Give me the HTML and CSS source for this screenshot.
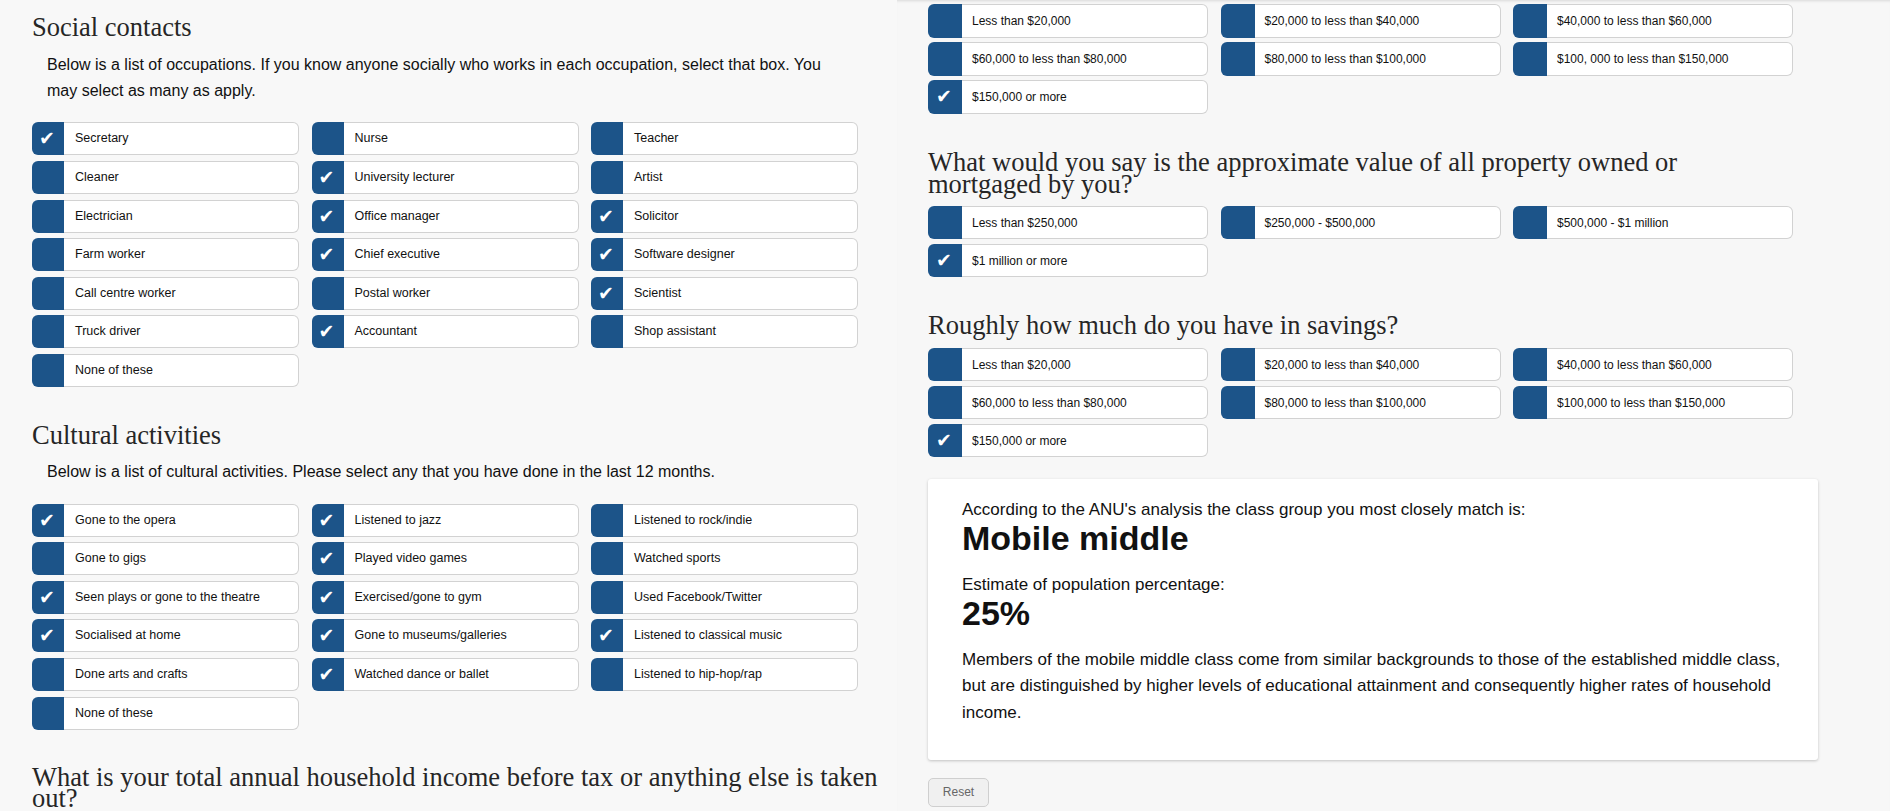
FILE: index.html
```html
<!DOCTYPE html>
<html lang="en">
<head>
<meta charset="utf-8">
<title>Class survey</title>
<link rel="stylesheet" href="styles.css">
</head>
<body>
<div class="page">
  <section class="pane pane-left">
    <h2 class="q-title first">Social contacts</h2>
    <p class="q-intro">Below is a list of occupations. If you know anyone socially who works in each occupation, select that box. You may select as many as apply.</p>
    <div class="opts">
      <div class="opt on"><span class="box">✔</span><span class="lbl">Secretary</span></div>
      <div class="opt"><span class="box"></span><span class="lbl">Nurse</span></div>
      <div class="opt"><span class="box"></span><span class="lbl">Teacher</span></div>
      <div class="opt"><span class="box"></span><span class="lbl">Cleaner</span></div>
      <div class="opt on"><span class="box">✔</span><span class="lbl">University lecturer</span></div>
      <div class="opt"><span class="box"></span><span class="lbl">Artist</span></div>
      <div class="opt"><span class="box"></span><span class="lbl">Electrician</span></div>
      <div class="opt on"><span class="box">✔</span><span class="lbl">Office manager</span></div>
      <div class="opt on"><span class="box">✔</span><span class="lbl">Solicitor</span></div>
      <div class="opt"><span class="box"></span><span class="lbl">Farm worker</span></div>
      <div class="opt on"><span class="box">✔</span><span class="lbl">Chief executive</span></div>
      <div class="opt on"><span class="box">✔</span><span class="lbl">Software designer</span></div>
      <div class="opt"><span class="box"></span><span class="lbl">Call centre worker</span></div>
      <div class="opt"><span class="box"></span><span class="lbl">Postal worker</span></div>
      <div class="opt on"><span class="box">✔</span><span class="lbl">Scientist</span></div>
      <div class="opt"><span class="box"></span><span class="lbl">Truck driver</span></div>
      <div class="opt on"><span class="box">✔</span><span class="lbl">Accountant</span></div>
      <div class="opt"><span class="box"></span><span class="lbl">Shop assistant</span></div>
      <div class="opt"><span class="box"></span><span class="lbl">None of these</span></div>
    </div>

    <h2 class="q-title">Cultural activities</h2>
    <p class="q-intro">Below is a list of cultural activities. Please select any that you have done in the last 12 months.</p>
    <div class="opts">
      <div class="opt on"><span class="box">✔</span><span class="lbl">Gone to the opera</span></div>
      <div class="opt on"><span class="box">✔</span><span class="lbl">Listened to jazz</span></div>
      <div class="opt"><span class="box"></span><span class="lbl">Listened to rock/indie</span></div>
      <div class="opt"><span class="box"></span><span class="lbl">Gone to gigs</span></div>
      <div class="opt on"><span class="box">✔</span><span class="lbl">Played video games</span></div>
      <div class="opt"><span class="box"></span><span class="lbl">Watched sports</span></div>
      <div class="opt on"><span class="box">✔</span><span class="lbl">Seen plays or gone to the theatre</span></div>
      <div class="opt on"><span class="box">✔</span><span class="lbl">Exercised/gone to gym</span></div>
      <div class="opt"><span class="box"></span><span class="lbl">Used Facebook/Twitter</span></div>
      <div class="opt on"><span class="box">✔</span><span class="lbl">Socialised at home</span></div>
      <div class="opt on"><span class="box">✔</span><span class="lbl">Gone to museums/galleries</span></div>
      <div class="opt on"><span class="box">✔</span><span class="lbl">Listened to classical music</span></div>
      <div class="opt"><span class="box"></span><span class="lbl">Done arts and crafts</span></div>
      <div class="opt on"><span class="box">✔</span><span class="lbl">Watched dance or ballet</span></div>
      <div class="opt"><span class="box"></span><span class="lbl">Listened to hip-hop/rap</span></div>
      <div class="opt"><span class="box"></span><span class="lbl">None of these</span></div>
    </div>

    <h2 class="q-title q-long">What is your total annual household income before tax or anything else is taken out?</h2>
  </section>

  <section class="pane pane-right">
    <div class="opts opts-r opts-top">
      <div class="opt"><span class="box"></span><span class="lbl">Less than $20,000</span></div>
      <div class="opt"><span class="box"></span><span class="lbl">$20,000 to less than $40,000</span></div>
      <div class="opt"><span class="box"></span><span class="lbl">$40,000 to less than $60,000</span></div>
      <div class="opt"><span class="box"></span><span class="lbl">$60,000 to less than $80,000</span></div>
      <div class="opt"><span class="box"></span><span class="lbl">$80,000 to less than $100,000</span></div>
      <div class="opt"><span class="box"></span><span class="lbl">$100, 000 to less than $150,000</span></div>
      <div class="opt on"><span class="box">✔</span><span class="lbl">$150,000 or more</span></div>
    </div>

    <h2 class="q-title q-r">What would you say is the approximate value of all property owned or mortgaged by you?</h2>
    <div class="opts opts-r">
      <div class="opt"><span class="box"></span><span class="lbl">Less than $250,000</span></div>
      <div class="opt"><span class="box"></span><span class="lbl">$250,000 - $500,000</span></div>
      <div class="opt"><span class="box"></span><span class="lbl">$500,000 - $1 million</span></div>
      <div class="opt on"><span class="box">✔</span><span class="lbl">$1 million or more</span></div>
    </div>

    <h2 class="q-title q-r q-sav">Roughly how much do you have in savings?</h2>
    <div class="opts opts-r opts-sav">
      <div class="opt"><span class="box"></span><span class="lbl">Less than $20,000</span></div>
      <div class="opt"><span class="box"></span><span class="lbl">$20,000 to less than $40,000</span></div>
      <div class="opt"><span class="box"></span><span class="lbl">$40,000 to less than $60,000</span></div>
      <div class="opt"><span class="box"></span><span class="lbl">$60,000 to less than $80,000</span></div>
      <div class="opt"><span class="box"></span><span class="lbl">$80,000 to less than $100,000</span></div>
      <div class="opt"><span class="box"></span><span class="lbl">$100,000 to less than $150,000</span></div>
      <div class="opt on"><span class="box">✔</span><span class="lbl">$150,000 or more</span></div>
    </div>

    <div class="result">
      <p class="r-intro">According to the ANU's analysis the class group you most closely match is:</p>
      <p class="r-big">Mobile middle</p>
      <p class="r-intro r-est">Estimate of population percentage:</p>
      <p class="r-big">25%</p>
      <p class="r-desc">Members of the mobile middle class come from similar backgrounds to those of the established middle class, but are distinguished by higher levels of educational attainment and consequently higher rates of household income.</p>
    </div>

    <button class="reset" type="button">Reset</button>
  </section>
</div>
</body>
</html>
```

FILE: styles.css
```css
* { box-sizing: border-box; }

html, body {
  margin: 0;
  padding: 0;
  height: 100%;
  overflow: hidden;
}

body {
  font-family: "Liberation Sans", Arial, sans-serif;
  color: #111;
  background: #f7f7f7;
}

.page {
  display: flex;
  height: 811px;
}

.pane {
  overflow: hidden;
}

.pane-left {
  width: 897px;
  flex: none;
  background: #f8f8f8;
  padding-left: 32px;
}

.pane-right {
  flex: 1;
  background: #f7f7f7;
  padding-left: 31px;
  padding-top: 4px;
  box-shadow: inset 0 3px 3px -2px rgba(0, 0, 0, 0.12);
}

.q-title {
  font-family: "Liberation Serif", "Times New Roman", serif;
  font-weight: normal;
  font-size: 26.5px;
  line-height: 22px;
  color: #262626;
  margin: 37px 0 0 0;
  width: 855px;
}

.q-title.first {
  margin-top: 16px;
}

.q-long {
  margin-top: 37px;
  line-height: 21px;
}

.q-r {
  margin-top: 37px;
  width: 860px;
}

.q-sav {
  margin-top: 37px;
}

.q-intro {
  font-size: 16px;
  line-height: 26.7px;
  margin: 13.5px 0 0 15px;
  width: 790px;
  color: #111;
}

.opts {
  display: grid;
  grid-template-columns: repeat(3, 267px);
  column-gap: 12.5px;
  row-gap: 5.6px;
  margin-top: 17.5px;
}

.opt {
  display: flex;
  height: 33px;
}

.box {
  width: 32px;
  flex: none;
  background: #1c5489;
  border-radius: 6px 0 0 6px;
  color: #fff;
  font-family: "DejaVu Sans", sans-serif;
  font-size: 19px;
  line-height: 33px;
  padding-left: 7px;
}

.lbl {
  flex: 1;
  background: #fff;
  border: 1px solid #d2d2d2;
  border-left: none;
  border-radius: 0 6px 6px 0;
  font-size: 12.5px;
  line-height: 31px;
  padding-left: 11px;
  color: #111;
  white-space: nowrap;
}

.opts-r {
  grid-template-columns: repeat(3, 280px);
  column-gap: 12.5px;
  row-gap: 4.5px;
  margin-top: 11px;
}

.opts-sav {
  margin-top: 11.5px;
}

.opts-top {
  margin-top: 0;
}

.opts-r .opt {
  height: 33.5px;
}

.opts-r .box {
  width: 34px;
  line-height: 33.5px;
  padding-left: 8px;
}

.opts-r .lbl {
  font-size: 12px;
  line-height: 32.5px;
  padding-left: 10px;
}

.result {
  margin-top: 22px;
  width: 890px;
  background: #fff;
  border-radius: 3px;
  box-shadow: 0 1px 3px rgba(0, 0, 0, 0.22);
  padding: 21px 34px 33px 34px;
}

.result p {
  margin: 0;
}

.r-intro {
  font-size: 17px;
  line-height: 20px;
}

.r-est {
  margin-top: 19px !important;
}

.r-big {
  font-size: 34px;
  font-weight: bold;
  line-height: 36px;
}

.r-desc {
  font-size: 17px;
  line-height: 26.7px;
  margin-top: 15.5px !important;
}

.reset {
  display: block;
  margin-top: 18px;
  width: 61px;
  height: 29px;
  background: #f0f0f0;
  border: 1px solid #cfcfcf;
  border-radius: 5px;
  font-family: "Liberation Sans", Arial, sans-serif;
  font-size: 12px;
  color: #666;
  padding: 0;
}
```
